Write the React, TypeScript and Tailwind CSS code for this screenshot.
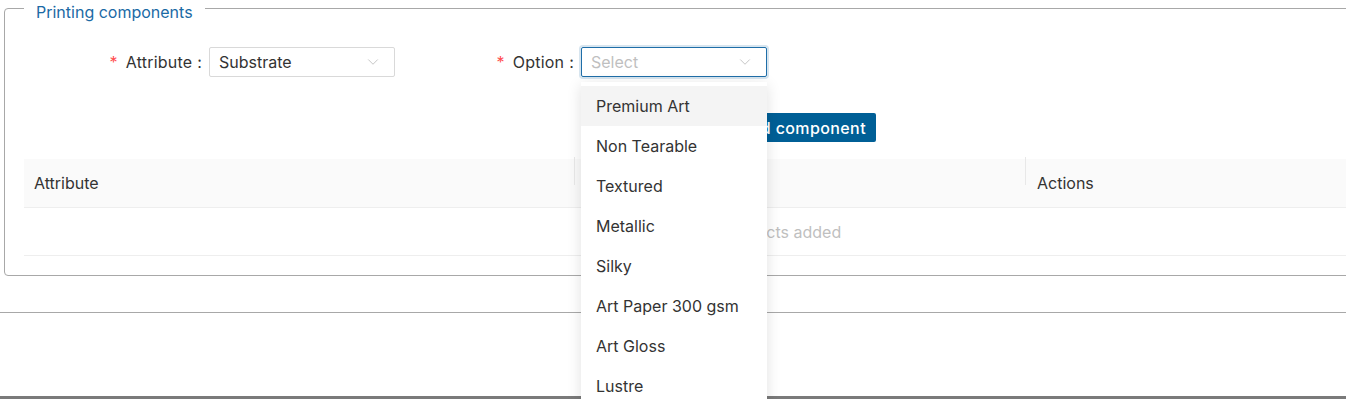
import { ChevronDown } from "lucide-react";

const options = [
  "Premium Art",
  "Non Tearable",
  "Textured",
  "Metallic",
  "Silky",
  "Art Paper 300 gsm",
  "Art Gloss",
  "Lustre",
  "Matte",
];

const FormItem = ({ label, children }: { label: string; children: React.ReactNode }) => (
  <div className="flex w-[372px] items-center">
    <label className="flex w-[186px] items-center justify-end pr-[7px] text-[16px] tracking-[0.2px] text-[#333]">
      <span className="mr-[8px] text-[16px] text-[#ff4d4f]">*</span>
      {label}
      <span className="ml-[5px]">:</span>
    </label>
    <div className="relative w-[186px]">{children}</div>
  </div>
);

const App = () => {
  return (
    <div className="relative h-[399px] w-full overflow-hidden bg-white font-['Inter',sans-serif] text-[#333]">
      {/* Printing components fieldset */}
      <fieldset className="ml-[4px] w-[1420px] rounded-[4px] border border-[#a8a8a8] pb-[19px] pl-[19px]">
        <legend className="ml-0 px-[12px] text-[16px] leading-4 text-[#1b6aa5]">
          <span className="relative top-[4px]">Printing components</span>
        </legend>

        <div className="ml-[-1px] mt-[31px] flex">
          <FormItem label="Attribute">
            <div className="flex h-[30px] items-center justify-between rounded-[2px] border border-[#d9d9d9] pl-[9px] pr-[12px]">
              <span className="text-[16px] text-[#333]">Substrate</span>
              <ChevronDown className="h-[18px] w-[18px] text-[#bfbfbf]" strokeWidth={1.2} />
            </div>
          </FormItem>
          <FormItem label="Option">
            <div className="flex h-[30px] items-center justify-between rounded-[2px] border border-[#1f6ea8] pl-[9px] pr-[12px] shadow-[0_0_0_2px_rgba(31,110,168,0.18)]">
              <span className="text-[16px] text-[#bfbfbf]">Select</span>
              <ChevronDown className="h-[18px] w-[18px] text-[#bfbfbf]" strokeWidth={1.2} />
            </div>
            {/* open dropdown */}
            <div className="absolute left-0 top-[35px] z-10 w-[186px] bg-white py-[4px] shadow-[0_3px_14px_rgba(0,0,0,0.12)]">
              {options.map((o, i) => (
                <div
                  key={o}
                  className={
                    "flex h-[40px] items-center px-[15px] text-[16px] text-[#333] " +
                    (i === 0 ? "bg-[#f4f4f4]" : "")
                  }
                >
                  {o}
                </div>
              ))}
            </div>
          </FormItem>
        </div>

        <div className="mt-[36px] flex w-[852px] justify-end">
          <button className="h-[29px] rounded-[2px] bg-[#005f96] pl-[14px] pr-[10px] text-[16px] font-medium tracking-[0.4px] text-white">
            Add component
          </button>
        </div>

        {/* table */}
        <div className="mt-[17px]">
          <div className="flex h-[49px] items-center border-b border-[#eeeeee] bg-[#fafafa] text-[16px] text-[#333]">
            <div className="relative w-[551px] pl-[10px]">
              Attribute
              <span className="absolute right-0 top-[-14px] h-[28px] w-px bg-[#e8e8e8]" />
            </div>
            <div className="relative w-[451px] pl-[10px]">
              Option
              <span className="absolute right-0 top-[-14px] h-[28px] w-px bg-[#e8e8e8]" />
            </div>
            <div className="pl-[11px]">Actions</div>
          </div>
          <div className="flex h-[48px] items-center border-b border-[#eeeeee]">
            <div className="w-[1489px] text-center text-[16px] text-[#bfbfbf]">No products added</div>
          </div>
        </div>
      </fieldset>

      <div className="mt-[36px] h-px w-full bg-[#a8a8a8]" />

      <div className="absolute bottom-0 left-0 h-[3px] w-full bg-[#7a7a7a]" />
    </div>
  );
};

export default App;
